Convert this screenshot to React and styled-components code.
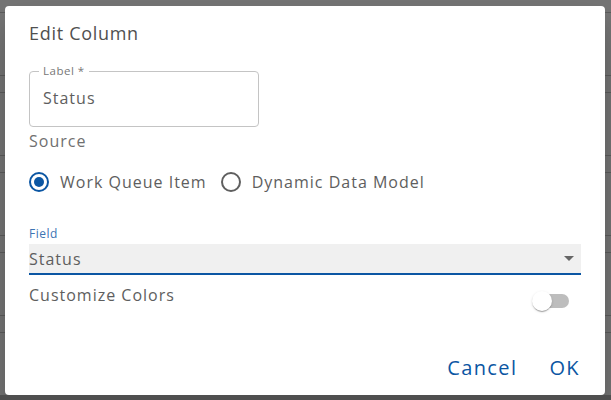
import React, { useState } from 'react';
import styled, { createGlobalStyle } from 'styled-components';

const GlobalStyle = createGlobalStyle`
  html, body {
    margin: 0;
    padding: 0;
    background: #747474;
  }
  * {
    box-sizing: border-box;
  }
`;

const BLUE = '#0b56a3';
const TEXT = '#5e5e5e';
const FONT = `"Open Sans", "Noto Sans", sans-serif`;

export default function App() {
  const [source, setSource] = useState('wqi');
  const [custom, setCustom] = useState(false);

  return (
    <>
      <GlobalStyle />
      <Screen>
        <Dialog>
          <Title>Edit Column</Title>

          <Outlined>
            <Legend>Label *</Legend>
            <OutlinedInput defaultValue="Status" />
          </Outlined>

          <SectionLabel>Source</SectionLabel>
          <RadioRow>
            <RadioOption onClick={() => setSource('wqi')}>
              <RadioDot checked={source === 'wqi'} />
              <span>Work Queue Item</span>
            </RadioOption>
            <RadioOption onClick={() => setSource('ddm')}>
              <RadioDot checked={source === 'ddm'} />
              <span>Dynamic Data Model</span>
            </RadioOption>
          </RadioRow>

          <FieldLabel>Field</FieldLabel>
          <FilledSelect>
            <span>Status</span>
            <svg width="10" height="5" viewBox="0 0 10 5">
              <path d="M0 0 L10 0 L5 5 Z" fill="#666" />
            </svg>
          </FilledSelect>

          <SwitchRow>
            <span>Customize Colors</span>
            <Switch $on={custom} onClick={() => setCustom(!custom)}>
              <Thumb $on={custom} />
            </Switch>
          </SwitchRow>

          <Actions>
            <TextButton>Cancel</TextButton>
            <TextButton>OK</TextButton>
          </Actions>
        </Dialog>
        <BottomBar />
      </Screen>
    </>
  );
}

const Screen = styled.div`
  width: 611px;
  height: 400px;
  display: flex;
  flex-direction: column;
  padding: 6px 6px 0 5px;
  background-color: #747474;
  background-image: repeating-linear-gradient(
    to bottom,
    transparent 0 12px,
    #5c5c5c 12px 13px,
    transparent 13px 75px,
    #5c5c5c 75px 76px,
    transparent 76px 80px
  );
`;

const BottomBar = styled.div`
  flex: 1;
  margin: 0 -6px 0 -5px;
  background: #4f4f4f;
`;

const Dialog = styled.div`
  width: 600px;
  height: 389px;
  flex: none;
  background: #fff;
  border-radius: 4px;
  box-shadow: 0 11px 15px -7px rgba(0,0,0,0.2), 0 24px 38px 3px rgba(0,0,0,0.14);
  display: flex;
  flex-direction: column;
  padding: 16px 24px 0 24px;
  font-family: ${FONT};
  color: ${TEXT};
  letter-spacing: 1px;
`;

const Title = styled.h2`
  margin: 0;
  font-size: 18px;
  line-height: 22px;
  font-weight: 500;
  letter-spacing: 0.7px;
  color: #505050;
`;

const Outlined = styled.fieldset`
  margin: 21px 0 0;
  width: 230px;
  height: 62px;
  border: 1px solid #c4c4c4;
  border-radius: 4px;
  padding: 0 13px;
`;

const Legend = styled.legend`
  font-size: 11.5px;
  line-height: 12px;
  letter-spacing: 0.5px;
  color: #777;
  padding: 0 4px;
  margin-left: -4px;
`;

const OutlinedInput = styled.input`
  border: none;
  outline: none;
  padding: 0;
  margin-top: 9px;
  width: 100%;
  font-family: ${FONT};
  font-size: 16px;
  line-height: 24px;
  letter-spacing: 1px;
  color: ${TEXT};
  background: transparent;
`;

const SectionLabel = styled.div`
  margin-top: 2px;
  font-size: 16px;
  line-height: 24px;
  color: #707070;
`;

const RadioRow = styled.div`
  display: flex;
  margin-top: 8px;
  margin-left: -11px;
  height: 42px;
`;

const RadioOption = styled.label`
  display: flex;
  align-items: center;
  margin-right: 3px;
  font-size: 16px;
  cursor: pointer;
  color: ${TEXT};
`;

const RadioDot = styled.span`
  width: 42px;
  height: 42px;
  display: flex;
  align-items: center;
  justify-content: center;
  position: relative;
  &::before {
    content: '';
    width: 20px;
    height: 20px;
    border-radius: 50%;
    border: 2px solid ${p => (p.checked ? BLUE : '#5f5f5f')};
    box-sizing: border-box;
  }
  &::after {
    content: '';
    position: absolute;
    width: 10px;
    height: 10px;
    border-radius: 50%;
    background: ${BLUE};
    display: ${p => (p.checked ? 'block' : 'none')};
  }
`;

const FieldLabel = styled.div`
  margin-top: 23px;
  font-size: 12px;
  line-height: 16px;
  letter-spacing: 0.5px;
  color: #3d74b3;
`;

const FilledSelect = styled.div`
  margin-top: 2px;
  height: 31px;
  background: #f0f0f0;
  border-bottom: 2px solid ${BLUE};
  display: flex;
  align-items: center;
  justify-content: space-between;
  padding: 0 7px 0 0;
  font-size: 16px;
  color: ${TEXT};
`;

const SwitchRow = styled.div`
  display: flex;
  align-items: flex-start;
  justify-content: space-between;
  margin-top: 8px;
  font-size: 16px;
  line-height: 24px;
  color: ${TEXT};
  padding-right: 12px;
`;

const Switch = styled.span`
  width: 36px;
  height: 14px;
  margin-top: 11px;
  border-radius: 7px;
  background: ${p => (p.$on ? '#8fb2d8' : '#bdbdbd')};
  position: relative;
  cursor: pointer;
`;

const Thumb = styled.span`
  position: absolute;
  top: -3px;
  left: ${p => (p.$on ? '17px' : '-1px')};
  width: 20px;
  height: 20px;
  border-radius: 50%;
  background: ${p => (p.$on ? BLUE : '#fff')};
  box-shadow: 0 2px 1px -1px rgba(0,0,0,0.2), 0 1px 1px 0 rgba(0,0,0,0.14), 0 1px 3px 0 rgba(0,0,0,0.12);
`;

const Actions = styled.div`
  margin-top: auto;
  margin-bottom: 9px;
  display: flex;
  justify-content: flex-end;
  gap: 16px;
  margin-right: -7px;
`;

const TextButton = styled.button`
  border: none;
  background: none;
  font-family: ${FONT};
  font-size: 20px;
  line-height: 24px;
  letter-spacing: 1.4px;
  color: ${BLUE};
  padding: 6px 8px;
  cursor: pointer;
`;
